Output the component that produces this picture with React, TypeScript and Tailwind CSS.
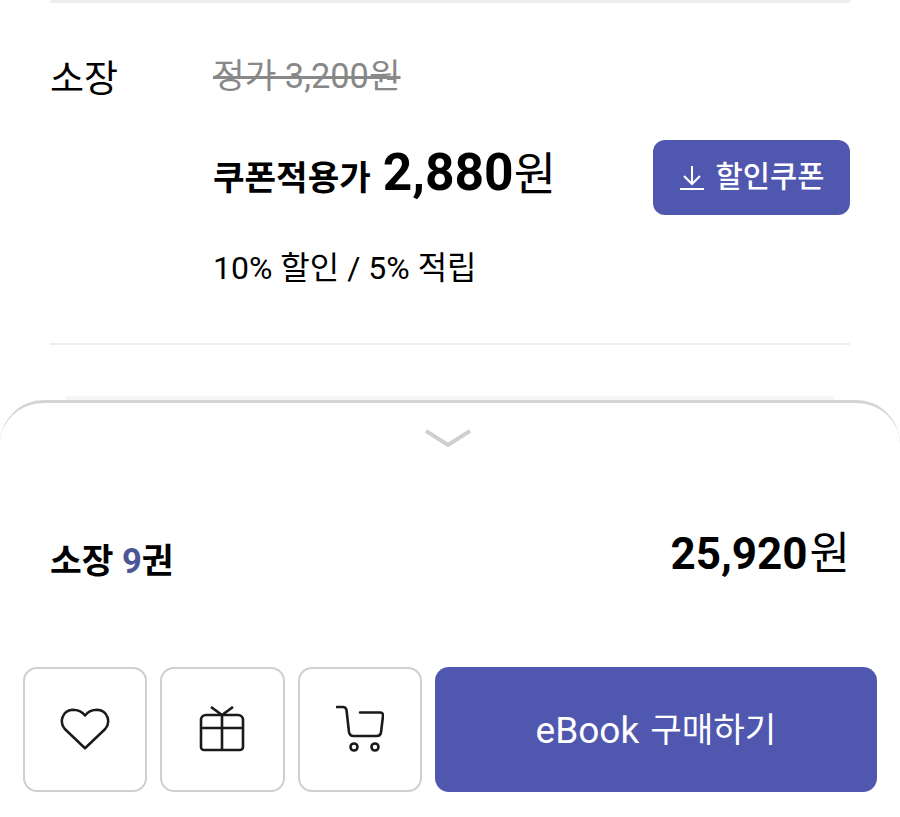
import React from "react";

const FONT = "font-['Roboto','Noto_Sans_CJK_KR',sans-serif]";

const SquareButton = ({ children, label }: { children: React.ReactNode; label: string }) => (
  <button
    aria-label={label}
    className="flex h-[125px] w-[124.3px] shrink-0 items-center justify-center rounded-[14px] border-2 border-[#cfcfcf] bg-white"
  >
    {children}
  </button>
);

const App = () => {
  return (
    <div className={`${FONT} flex h-[817px] w-[900px] flex-col overflow-hidden bg-white text-black`}>
      <div className="mx-[50px] h-[3px] shrink-0 bg-[#eeeeee]" />

      <div className="mx-[50px] flex h-[342px] shrink-0 flex-col border-b-2 border-[#eeeeee]">
        <div className="mt-[49px] flex">
          <div className="w-[163px] pt-[3px] text-[37px] leading-[50px]">소장</div>
          <div className="text-[34.4px] leading-[48px] text-[#888888] line-through">정가 3,200원</div>
        </div>

        <div className="mt-[35px] flex items-center justify-between pl-[163px]">
          <div className="flex items-baseline pb-[8px]">
            <span className="text-[34.3px] font-bold">쿠폰적용가</span>
            <span className="ml-[12px] text-[51.5px] leading-[64px] font-bold">2,880</span>
            <span className="text-[46px] leading-[64px]">원</span>
          </div>
          <button className="flex h-[75px] w-[197px] items-center justify-center gap-[11px] rounded-[12px] bg-[#5057af] text-[29.6px] font-medium text-white">
            <svg width="26" height="26" viewBox="0 0 26 26" fill="none" stroke="currentColor" strokeWidth="2">
              <path d="M13 1v17M5 11l8 8 8-8M1 24h24" />
            </svg>
            할인쿠폰
          </button>
        </div>

        <div className="mt-[30px] pl-[163px] text-[32px] leading-[46px]">10% 할인 / 5% 적립</div>
      </div>

      <div className="mx-[65px] mt-[51px] h-[4px] shrink-0 rounded-t-[4px] bg-[#f6f6f6]" />

      <div className="flex min-h-0 flex-1 flex-col rounded-t-[44px] border-t-[3px] border-[#d4d4d4] bg-white">
        <div className="flex justify-center pr-[5px] pt-[26px]">
          <svg width="46" height="20" viewBox="0 0 46 20" fill="none" stroke="#cfcfcf" strokeWidth="4">
            <path d="M1 2l22 14L45 2" />
          </svg>
        </div>

        <div className="mx-[50px] mt-[72px] flex items-start justify-between">
          <div className="pt-[15px] text-[34.5px] font-bold">
            소장 <span className="text-[#4c5596]">9</span>권
          </div>
          <div className="flex items-baseline">
            <span className="text-[44px] font-bold">25,920</span>
            <span className="ml-[2px] text-[44px]">원</span>
          </div>
        </div>

        <div className="mx-[23px] mt-[79px] flex gap-[13px]">
          <SquareButton label="찜하기">
            <svg width="50" height="44" viewBox="0 0 52 44" fill="none" stroke="#1a1a1a" strokeWidth="2.6" strokeLinejoin="round">
              <path d="M26 42 5 22C-1 15 2 3 13 2c6 0 10 2 13 6 3-4 7-6 13-6 11 1 14 13 8 20Z" />
            </svg>
          </SquareButton>
          <SquareButton label="선물하기">
            <svg width="46" height="46" viewBox="0 0 46 46" fill="none" stroke="#1a1a1a" strokeWidth="2.6" strokeLinejoin="round">
              <path d="M7 9h32a5 5 0 0 1 5 5v27a3 3 0 0 1-3 3H5a3 3 0 0 1-3-3V14a5 5 0 0 1 5-5ZM2 22h42M23 9v35M12 1l11 8 11-8" />
            </svg>
          </SquareButton>
          <SquareButton label="장바구니">
            <svg width="48" height="48" viewBox="0 0 48 48" fill="none" stroke="#1a1a1a" strokeWidth="2.6" strokeLinecap="round" strokeLinejoin="round">
              <path d="M1 2h6c2 0 3 1 3.500 3L13 27c.5 3 2 4 4.500 4H41c2 0 3.500-1 4-3.500L47 11c.3-2-.7-3.500-3-3.500H24" />
              <circle cx="18" cy="42" r="3.5" />
              <circle cx="39" cy="42" r="3.5" />
            </svg>
          </SquareButton>
          <button className="flex h-[125px] flex-1 items-center justify-center gap-[11px] rounded-[14px] bg-[#5057af] pt-[3px] text-white">
            <span className="text-[37px]">eBook</span>
            <span className="text-[34.3px]">구매하기</span>
          </button>
        </div>
      </div>
    </div>
  );
};

export default App;
